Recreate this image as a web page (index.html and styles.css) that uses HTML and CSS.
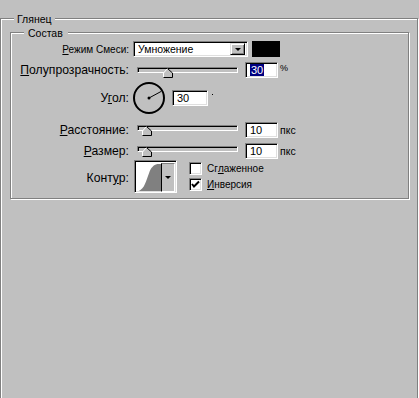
FILE: index.html
```html
<!DOCTYPE html>
<html lang="ru">
<head>
    <meta charset="UTF-8">
    <title>Глянец</title>
    <link rel="stylesheet" href="styles.css">
</head>
<body>
    <div class="group outer">
        <span class="group-title">Глянец</span>
        <div class="group inner">
            <span class="group-title">Состав</span>

            <div class="row row-mode">
                <label class="label small"><u>Р</u>ежим Смеси:</label>
                <div class="select">
                    <span class="select-text">Умножение</span>
                    <span class="drop-btn"><i class="tri"></i></span>
                </div>
                <div class="swatch"></div>
            </div>

            <div class="row row-opacity">
                <label class="label"><u>П</u>олупрозрачность:</label>
                <div class="slider">
                    <div class="track"></div>
                    <svg class="thumb" style="left: 26px" width="10" height="10" viewBox="0 0 10 10">
                        <polygon points="4.5,0.5 9.5,5 9.5,9.5 0.5,9.5 0.5,5" fill="#c0c0c0"/>
                        <polyline points="0.5,9.5 0.5,5 4.5,0.5" fill="none" stroke="#fff"/>
                        <polyline points="4.5,0.5 9.5,5 9.5,9.5 0.5,9.5" fill="none" stroke="#000"/>
                    </svg>
                </div>
                <div class="field"><span class="sel">30</span></div>
                <span class="unit pct">%</span>
            </div>

            <div class="row row-angle">
                <label class="label">У<u>г</u>ол:</label>
                <svg class="dial" width="34" height="32" viewBox="0 0 34 32">
                    <circle cx="17" cy="16" r="15" fill="none" stroke="#000" stroke-width="2"/>
                    <line x1="17" y1="16" x2="29" y2="9.5" stroke="#000" stroke-width="1"/>
                    <circle cx="17" cy="16" r="1.5" fill="#000"/>
                </svg>
                <div class="field angle-field">30</div>
                <span class="degree"></span>
            </div>

            <div class="row row-distance">
                <label class="label"><u>Р</u>асстояние:</label>
                <div class="slider">
                    <div class="track"></div>
                    <svg class="thumb" style="left: 5px" width="10" height="10" viewBox="0 0 10 10">
                        <polygon points="4.5,0.5 9.5,5 9.5,9.5 0.5,9.5 0.5,5" fill="#c0c0c0"/>
                        <polyline points="0.5,9.5 0.5,5 4.5,0.5" fill="none" stroke="#fff"/>
                        <polyline points="4.5,0.5 9.5,5 9.5,9.5 0.5,9.5" fill="none" stroke="#000"/>
                    </svg>
                </div>
                <div class="field">10</div>
                <span class="unit">пкс</span>
            </div>

            <div class="row row-size">
                <label class="label"><u>Р</u>азмер:</label>
                <div class="slider">
                    <div class="track"></div>
                    <svg class="thumb" style="left: 5px" width="10" height="10" viewBox="0 0 10 10">
                        <polygon points="4.5,0.5 9.5,5 9.5,9.5 0.5,9.5 0.5,5" fill="#c0c0c0"/>
                        <polyline points="0.5,9.5 0.5,5 4.5,0.5" fill="none" stroke="#fff"/>
                        <polyline points="4.5,0.5 9.5,5 9.5,9.5 0.5,9.5" fill="none" stroke="#000"/>
                    </svg>
                </div>
                <div class="field">10</div>
                <span class="unit">пкс</span>
            </div>

            <div class="row row-contour">
                <label class="label">Конт<u>у</u>р:</label>
                <div class="contour">
                    <svg class="curve" width="26" height="29" viewBox="0 0 26 29">
                        <path d="M2,29 C8,27 10,18 13,10 C15,4 18,1 22,0 L26,0 L26,29 Z" fill="#808080"/>
                    </svg>
                    <span class="contour-btn"><i class="tri"></i></span>
                </div>
                <div class="checks">
                    <label class="check"><span class="box"></span>Сг<u>л</u>аженное</label>
                    <label class="check"><span class="box checked">
                        <svg width="9" height="9" viewBox="0 0 9 9">
                            <polyline points="1,4 3,6.5 8,1.5" fill="none" stroke="#000" stroke-width="2"/>
                        </svg>
                    </span><u>И</u>нверсия</label>
                </div>
            </div>
        </div>
    </div>
</body>
</html>
```

FILE: styles.css
```css
/* Dialog styles */
html {
    overflow: hidden;
}

body {
    margin: 0;
    padding: 0;
    background-color: #c0c0c0;
    font-family: 'Liberation Sans', Arial, sans-serif;
    font-size: 10px;
    color: #000;
}

/* Etched group box */
.group {
    position: relative;
    box-sizing: border-box;
    border: 1px solid #808080;
    box-shadow: 1px 1px 0 #fff, inset 1px 1px 0 #fff;
}

.group-title {
    position: absolute;
    top: -6px;
    left: 13px;
    padding: 0 3px;
    line-height: 12px;
    font-size: 10.5px;
    background-color: #c0c0c0;
}

.outer {
    width: 418px;
    height: 380px;
    margin-top: 18px;
    padding: 13px 8px 0 9px;
    border-bottom: 0;
}

.inner {
    width: 399px;
    padding: 8px 0 5px 0;
}

.inner .group-title {
    padding: 0 5px 0 4px;
}

/* Rows */
.row {
    display: flex;
    align-items: center;
    height: 16px;
}

.row-opacity { margin-top: 5px; }
.row-angle { margin-top: 4px; height: 32px; }
.row-distance { margin-top: 8px; }
.row-size { margin-top: 5px; }
.row-contour { margin-top: 1px; height: 33px; align-items: flex-start; }

.label {
    width: 118px;
    flex: none;
    text-align: right;
    font-size: 12.2px;
    white-space: nowrap;
}

.label.small {
    font-size: 10px;
}

.row-contour .label {
    margin-top: 11px;
}

/* Sunken fields */
.select,
.field,
.contour,
.box,
.track {
    box-sizing: border-box;
    border: 1px solid;
    border-color: #808080 #fff #fff #808080;
    box-shadow: inset 1px 1px 0 #000, inset -1px -1px 0 #dfdfdf;
}

.select {
    display: flex;
    align-items: center;
    justify-content: space-between;
    width: 115px;
    height: 16px;
    margin-left: 4px;
    padding: 0 2px 0 4px;
    background-color: #fff;
}

.select-text {
    font-size: 10.5px;
}

.drop-btn,
.contour-btn {
    display: flex;
    align-items: center;
    justify-content: center;
    box-sizing: border-box;
    background-color: #c0c0c0;
    border: 1px solid;
    border-color: #dfdfdf #000 #000 #dfdfdf;
    box-shadow: inset 1px 1px 0 #fff, inset -1px -1px 0 #808080;
}

.drop-btn {
    width: 15px;
    height: 12px;
}

.tri {
    width: 0;
    height: 0;
    border-left: 3px solid transparent;
    border-right: 3px solid transparent;
    border-top: 3px solid #000;
}

.swatch {
    width: 28px;
    height: 16px;
    margin-left: 4px;
    background-color: #000;
}

/* Sliders */
.slider {
    position: relative;
    width: 101px;
    height: 16px;
    margin-left: 8px;
}

.track {
    width: 101px;
    height: 6px;
    margin-top: 5px;
    background-color: #c0c0c0;
    box-shadow: inset 1px 1px 0 #000;
}

.thumb {
    position: absolute;
    top: 6px;
}

.row-distance .track,
.row-size .track {
    margin-top: 3px;
}

.row-distance .thumb,
.row-size .thumb {
    top: 4px;
}

.field {
    width: 33px;
    height: 16px;
    margin-left: 7px;
    padding: 1px 0 0 4px;
    background-color: #fff;
    font-size: 11px;
    line-height: 12px;
}

.sel {
    display: inline-block;
    padding: 0 1px;
    background-color: #000080;
    color: #fff;
}

.unit {
    margin-left: 2px;
    font-size: 10.5px;
}

.pct {
    font-size: 9px;
    margin-top: -4px;
}

/* Angle */
.dial {
    margin-left: 3px;
}

.angle-field {
    width: 36px;
    margin-left: 6px;
}

.degree {
    width: 1px;
    height: 1px;
    margin: -8px 0 0 4px;
    background-color: #000;
}

/* Contour */
.contour {
    display: flex;
    width: 43px;
    height: 33px;
    margin-left: 5px;
    padding: 2px 1px 1px 2px;
    background-color: #fff;
}

.curve {
    display: block;
}

.contour-btn {
    width: 15px;
    height: 29px;
    margin-left: auto;
    border-color: #808080 #fff #fff #000;
    box-shadow: none;
}

.checks {
    display: flex;
    flex-direction: column;
    gap: 3px;
    margin: 2px 0 0 12px;
}

.check {
    display: flex;
    align-items: center;
    font-size: 10px;
}

.box {
    display: flex;
    align-items: center;
    justify-content: center;
    width: 13px;
    height: 13px;
    margin-right: 5px;
    background-color: #fff;
}
```
